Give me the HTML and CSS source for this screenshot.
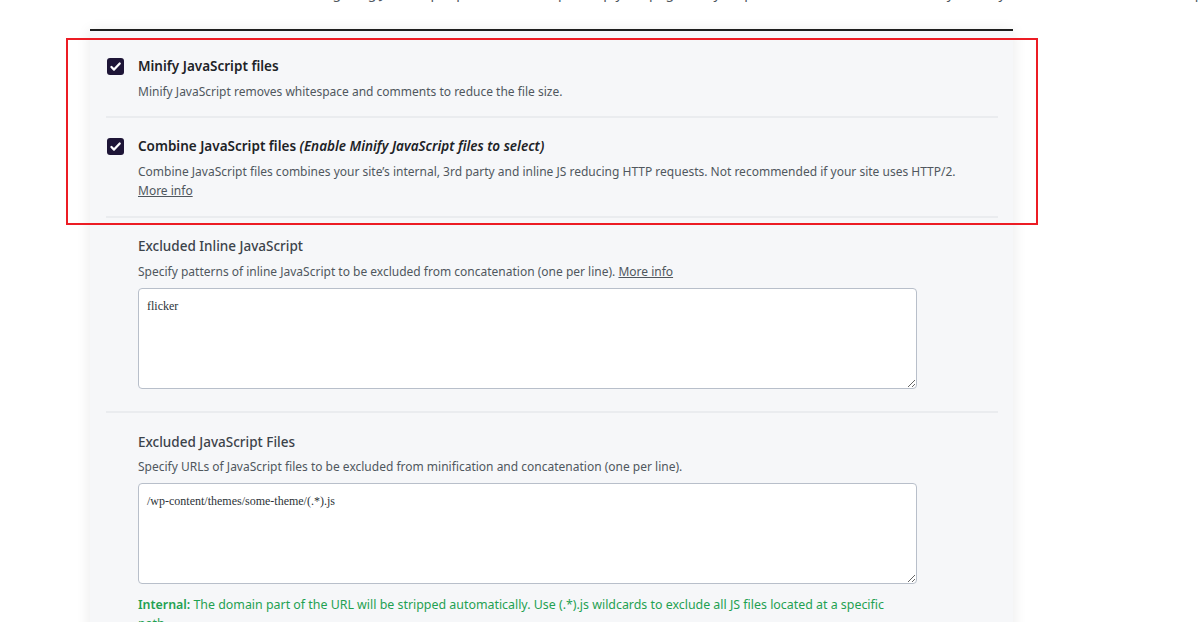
FILE: index.html
```html
<!DOCTYPE html>
<html lang="en">
<head>
  <meta charset="UTF-8" />
  <meta name="viewport" content="width=device-width, initial-scale=1.0"/>
  <title>File Optimization – JavaScript</title>
  <link rel="stylesheet" href="styles.css">
</head>
<body>

  <p class="intro">Configuring JavaScript optimization to speed up your pages may help reduce the load time, but may break your site — test after each step.</p>

  <div class="panel">

    <div class="option">
      <span class="check" aria-hidden="true">
        <svg viewBox="0 0 16 16" width="13" height="13"><path d="M3 8.6l3.2 3.2L13.2 4.4" fill="none" stroke="#fff" stroke-width="2.8" stroke-linecap="round" stroke-linejoin="round"/></svg>
      </span>
      <div class="option-body">
        <div class="option-title">Minify JavaScript files</div>
        <p class="option-desc">Minify JavaScript removes whitespace and comments to reduce the file size.</p>
      </div>
    </div>

    <div class="option">
      <span class="check" aria-hidden="true">
        <svg viewBox="0 0 16 16" width="13" height="13"><path d="M3 8.6l3.2 3.2L13.2 4.4" fill="none" stroke="#fff" stroke-width="2.8" stroke-linecap="round" stroke-linejoin="round"/></svg>
      </span>
      <div class="option-body">
        <div class="option-title">Combine JavaScript files <em>(Enable Minify JavaScript files to select)</em></div>
        <p class="option-desc">Combine JavaScript files combines your site’s internal, 3rd party and inline JS reducing HTTP requests. Not recommended if your site uses HTTP/2.<br><a href="#">More info</a></p>
      </div>
    </div>

    <div class="field">
      <div class="field-title">Excluded Inline JavaScript</div>
      <p class="field-desc">Specify patterns of inline JavaScript to be excluded from concatenation (one per line). <a href="#">More info</a></p>
      <textarea class="field-input">flicker</textarea>
    </div>

    <div class="field">
      <div class="field-title">Excluded JavaScript Files</div>
      <p class="field-desc">Specify URLs of JavaScript files to be excluded from minification and concatenation (one per line).</p>
      <textarea class="field-input">/wp-content/themes/some-theme/(.*).js</textarea>
      <p class="field-note"><strong>Internal:</strong> The domain part of the URL will be stripped automatically. Use (.*).js wildcards to exclude all JS files located at a specific path.</p>
    </div>

  </div>

  <div class="highlight"></div>

</body>
</html>
```

FILE: styles.css
```css
body {
  margin: 0;
  background: #fff;
  font-family: "Noto Sans", "Open Sans", sans-serif;
  color: #1d2327;
  overflow: hidden;
}

.intro {
  margin: -17px 0 0 298px;
  font-size: 14px;
  line-height: 20px;
  color: #50575e;
  white-space: nowrap;
}

.panel {
  width: 923px;
  margin: 26px 0 0 90px;
  padding: 0 15px 0 16px;
  box-sizing: border-box;
  background: #f6f7f9;
  border-top: 2px solid #1e1e1e;
  box-shadow: 0 2px 14px rgba(0, 0, 0, 0.09);
}

/* checkbox rows */
.option {
  display: flex;
  align-items: flex-start;
  gap: 14px;
  padding: 25px 0 15px 1px;
  border-bottom: 2px solid #eaecef;
}

.option + .option {
  padding-top: 18px;
  padding-bottom: 16px;
}

.check {
  flex: none;
  display: flex;
  align-items: center;
  justify-content: center;
  width: 17px;
  height: 17px;
  margin-top: 2px;
  border-radius: 3px;
  background: #1e1537;
}

.option-title,
.field-title {
  font-size: 13.5px;
  font-weight: 600;
  line-height: 20px;
}

.field-title {
  font-weight: 500;
  color: #3c434a;
}

.option-title em {
  font-style: italic;
}

.option-desc,
.field-desc {
  margin: 6px 0 0;
  font-size: 12px;
  line-height: 19px;
  color: #50575e;
}

.option-desc a,
.field-desc a {
  color: #50575e;
  text-decoration: underline;
}

/* text fields */
.field {
  padding: 18px 0 22px 32px;
  border-bottom: 2px solid #eaecef;
}

.field + .field {
  padding-top: 19px;
  border-bottom: none;
}

.field + .field .field-desc {
  margin-top: 5px;
}

.field-input {
  display: block;
  width: 779px;
  height: 101px;
  margin-top: 7px;
  padding: 10px 8px;
  box-sizing: border-box;
  border: 1px solid #b8bfca;
  border-radius: 4px;
  background: #fff;
  font-family: "Liberation Serif", serif;
  font-size: 12px;
  color: #2c3338;
}

.field-note {
  max-width: 760px;
  margin: 11px 0 0;
  font-size: 12.4px;
  line-height: 19px;
  color: #1fa152;
}

.field-note strong {
  font-weight: 600;
}

/* red annotation frame drawn over the first two options */
.highlight {
  position: absolute;
  left: 66px;
  top: 38px;
  width: 972px;
  height: 187px;
  box-sizing: border-box;
  border: 2px solid #ec1c24;
}
```
